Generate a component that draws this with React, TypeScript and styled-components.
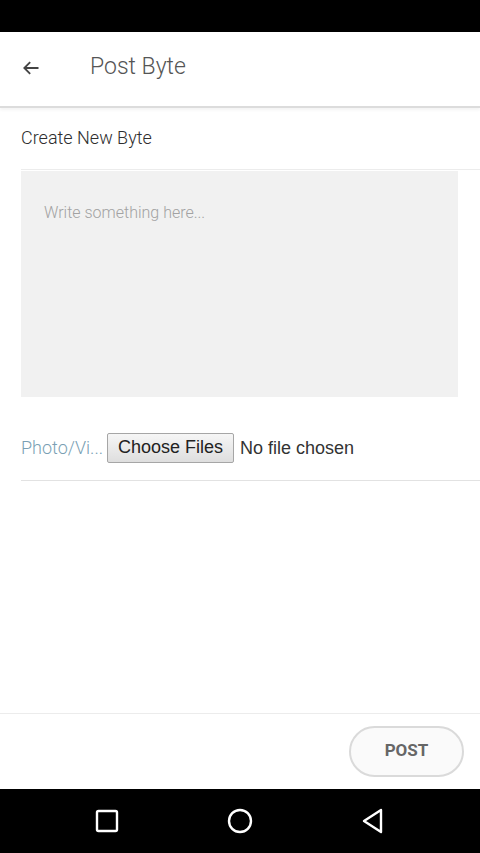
import React from 'react';
import styled, { createGlobalStyle } from 'styled-components';

const GlobalStyle = createGlobalStyle`
  html, body {
    margin: 0;
    padding: 0;
    background: #fff;
  }
  body {
    font-family: Roboto, 'Noto Sans', sans-serif;
  }
  * {
    box-sizing: border-box;
  }
`;

const Screen = styled.div`
  width: 480px;
  height: 853px;
  display: flex;
  flex-direction: column;
  background: #fff;
  overflow: hidden;
`;

const StatusBar = styled.div`
  height: 32px;
  flex-shrink: 0;
  background: #000;
`;

const Header = styled.header`
  height: 76px;
  flex-shrink: 0;
  display: flex;
  align-items: center;
  padding-bottom: 5px;
  border-bottom: 2px solid #dcdcdc;
  box-shadow: 0 2px 3px rgba(0, 0, 0, 0.05);
`;

const BackButton = styled.button`
  width: 64px;
  height: 100%;
  padding: 2px 0 0 21px;
  border: 0;
  background: none;
  display: flex;
  align-items: center;
  cursor: pointer;
`;

const Title = styled.h1`
  margin: 0 0 0 26px;
  font-size: 23px;
  font-weight: 300;
  color: #555;
`;

const Content = styled.main`
  flex: 1;
  padding-left: 21px;
  display: flex;
  flex-direction: column;
`;

const SectionTitle = styled.div`
  height: 62px;
  display: flex;
  align-items: center;
  padding-bottom: 3px;
  font-size: 18px;
  font-weight: 300;
  color: #2e2e2e;
  border-bottom: 1px solid #ececec;
`;

const TextArea = styled.textarea`
  width: 437px;
  height: 226px;
  margin-top: 1px;
  border: 0;
  resize: none;
  background: #f1f1f1;
  padding: 32px 23px;
  font-family: Roboto, 'Noto Sans', sans-serif;
  font-size: 16px;
  color: #444;
  outline: none;

  &::placeholder {
    color: #a2a2a2;
    font-weight: 300;
  }
`;

const UploadRow = styled.div`
  height: 84px;
  padding-top: 18px;
  display: flex;
  align-items: center;
  gap: 4px;
  border-bottom: 1px solid #e2e2e2;
`;

const UploadLabel = styled.label`
  font-size: 18px;
  font-weight: 300;
  color: #7a9fb4;
`;

const FileInput = styled.input`
  font-family: 'Liberation Sans', Arial, sans-serif;
  font-size: 18px;
  color: #333;

  &::file-selector-button {
    font-family: 'Liberation Sans', Arial, sans-serif;
    font-size: 18px;
    height: 30px;
    padding: 0 10px;
    margin-right: 6px;
    border: 1px solid #a6a6a6;
    border-radius: 2px;
    background: linear-gradient(#f6f6f6, #dedede);
    color: #222;
  }
`;

const Footer = styled.footer`
  height: 76px;
  flex-shrink: 0;
  border-top: 1px solid #ececec;
  display: flex;
  align-items: center;
  justify-content: flex-end;
  padding-right: 16px;
`;

const PostButton = styled.button`
  width: 115px;
  height: 51px;
  padding-bottom: 4px;
  border-radius: 26px;
  border: 2px solid #dadada;
  background: #fafafa;
  font-family: Roboto, 'Noto Sans', sans-serif;
  font-size: 17px;
  font-weight: 700;
  color: #666;
  cursor: pointer;
`;

const NavBar = styled.nav`
  height: 64px;
  flex-shrink: 0;
  background: #000;
  display: flex;
  align-items: center;
  justify-content: center;
  gap: 105px;
`;

const NavIcon = styled.svg`
  width: 28px;
  height: 28px;
  display: block;
`;

const ArrowBack = () => (
  <svg width="20" height="20" viewBox="0 0 24 24" fill="none" stroke="#444" strokeWidth="2.2">
    <path d="M21 12H4M11 5l-7 7 7 7" />
  </svg>
);

export default function App() {
  return (
    <>
      <GlobalStyle />
      <Screen>
        <StatusBar />
        <Header>
          <BackButton aria-label="Back">
            <ArrowBack />
          </BackButton>
          <Title>Post Byte</Title>
        </Header>
        <Content>
          <SectionTitle>Create New Byte</SectionTitle>
          <TextArea placeholder="Write something here..." />
          <UploadRow>
            <UploadLabel htmlFor="media">Photo/Vi...</UploadLabel>
            <FileInput id="media" type="file" multiple />
          </UploadRow>
        </Content>
        <Footer>
          <PostButton>POST</PostButton>
        </Footer>
        <NavBar>
          <NavIcon viewBox="0 0 28 28" fill="none" stroke="#fff" strokeWidth="2.4">
            <rect x="4" y="4" width="20" height="20" rx="1.5" />
          </NavIcon>
          <NavIcon viewBox="0 0 28 28" fill="none" stroke="#fff" strokeWidth="2.4">
            <circle cx="14" cy="14" r="11" />
          </NavIcon>
          <NavIcon viewBox="0 0 28 28" fill="none" stroke="#fff" strokeWidth="2.4" strokeLinejoin="round">
            <path d="M22 3 L5 14 L22 25 Z" />
          </NavIcon>
        </NavBar>
      </Screen>
    </>
  );
}
